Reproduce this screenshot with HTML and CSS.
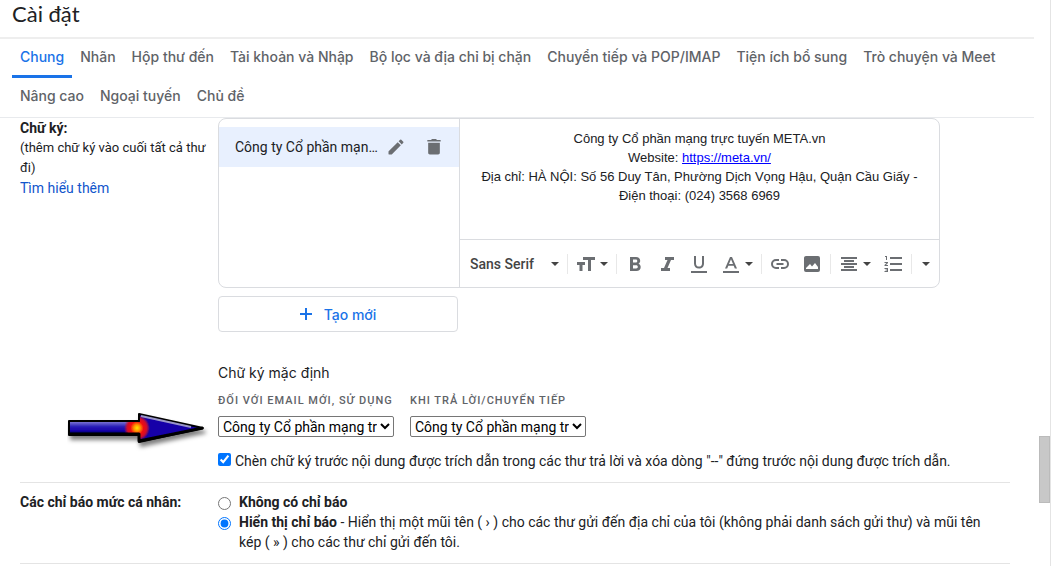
FILE: index.html
```html
<!DOCTYPE html>
<html lang="vi">
<head>
    <meta charset="UTF-8">
    <meta name="viewport" content="width=device-width, initial-scale=1.0">
    <title>Cài đặt</title>
    <link rel="stylesheet" href="styles.css">
</head>
<body>
    <main class="settings">
        <h1 class="title">Cài đặt</h1>
        <nav class="tabs">
            <a class="tab active" href="#chung">Chung</a>
            <a class="tab" href="#nhan">Nhãn</a>
            <a class="tab" href="#hopthu">Hộp thư đến</a>
            <a class="tab" href="#taikhoan">Tài khoản và Nhập</a>
            <a class="tab" href="#boloc">Bộ lọc và địa chỉ bị chặn</a>
            <a class="tab" href="#chuyentiep">Chuyển tiếp và POP/IMAP</a>
            <a class="tab" href="#tienich">Tiện ích bổ sung</a>
            <a class="tab" href="#trochuyen">Trò chuyện và Meet</a>
            <a class="tab" href="#nangcao">Nâng cao</a>
            <a class="tab" href="#ngoaituyen">Ngoại tuyến</a>
            <a class="tab" href="#chude">Chủ đề</a>
        </nav>

        <section class="row">
            <div class="row-label">
                <b>Chữ ký:</b>
                <p class="hint">(thêm chữ ký vào cuối tất cả thư đi)</p>
                <a class="more" href="#more">Tìm hiểu thêm</a>
            </div>
            <div class="row-body">
                <div class="editor">
                    <div class="sig-list">
                        <div class="sig-item">
                            <span class="sig-name">Công ty Cổ phần mạng trực tuyến META</span>
                            <button class="icon-btn" type="button" aria-label="Chỉnh sửa">
                                <svg class="icon" viewBox="0 0 24 24"><path d="M3 17.46v3.04c0 .28.22.5.5.5h3.04c.13 0 .26-.05.35-.15L17.81 9.94l-3.75-3.75L3.15 17.1c-.1.1-.15.22-.15.36zM20.71 7.04a1 1 0 0 0 0-1.41l-2.34-2.34a1 1 0 0 0-1.41 0l-1.83 1.83 3.75 3.75 1.83-1.83z"/></svg>
                            </button>
                            <button class="icon-btn trash" type="button" aria-label="Xóa">
                                <svg class="icon" viewBox="0 0 24 24"><path d="M5 19c0 1.100.9 2 2 2h10c1.100 0 2-.9 2-2V7H5v12zM20 3.500h-4.500l-1-1h-5l-1 1H4v2h16z"/></svg>
                            </button>
                        </div>
                    </div>
                    <div class="compose">
                        <div class="sig-text">
                            Công ty Cổ phần mạng trực tuyến META.vn<br>
                            Website: <a href="https://meta.vn/">https://meta.vn/</a><br>
                            Địa chỉ: HÀ NỘI: Số 56 Duy Tân, Phường Dịch Vọng Hậu, Quận Cầu Giấy -<br>
                            Điện thoại: (024) 3568 6969
                        </div>
                        <div class="toolbar">
                            <button class="tool font" type="button">Sans Serif <i class="caret"></i></button>
                            <span class="sep"></span>
                            <button class="tool drop" type="button" aria-label="Kích thước">
                                <svg class="icon" viewBox="0 0 20 20"><path d="M7 3h12v3h-4v11h-3V6H7zM1 8h8v3H6.500v6h-3v-6H1z"/></svg>
                                <i class="caret"></i>
                            </button>
                            <span class="sep"></span>
                            <button class="tool" type="button" aria-label="Đậm">
                                <svg class="icon" viewBox="0 0 20 20"><path fill-rule="evenodd" d="M5 3h6c2.500 0 4.200 1.500 4.200 3.700 0 1.400-.7 2.400-1.700 3 1.400.6 2.200 1.800 2.200 3.300 0 2.400-1.700 4-4.300 4H5zM8 5.600v3h2.800c1 0 1.500-.6 1.500-1.500s-.5-1.500-1.500-1.500zM8 11.200v3.200h3.200c1 0 1.600-.6 1.600-1.600s-.6-1.600-1.600-1.600z"/></svg>
                            </button>
                            <button class="tool" type="button" aria-label="Nghiêng">
                                <svg class="icon" viewBox="0 0 20 20"><path d="M8 3h9v3h-3l-3.500 8H13v3H4v-3h3l3.500-8H8z"/></svg>
                            </button>
                            <button class="tool" type="button" aria-label="Gạch chân">
                                <svg class="icon" viewBox="0 0 20 20"><path d="M5 2h2v7.500c0 2 1 3.100 3 3.100s3-1.100 3-3.100V2h2v7.600c0 3.100-2 5-5 5s-5-1.900-5-5zM2 17h16v2H2z"/></svg>
                            </button>
                            <button class="tool drop" type="button" aria-label="Màu chữ">
                                <svg class="icon" viewBox="0 0 20 20"><path fill-rule="evenodd" d="M9 3h2l5 11.500h-2.200l-1.100-2.800H7.300l-1.100 2.800H4zM10 5.200 8 10h4zM2 17h16v2H2z"/></svg>
                                <i class="caret"></i>
                            </button>
                            <span class="sep"></span>
                            <button class="tool" type="button" aria-label="Liên kết">
                                <svg class="icon" viewBox="0 0 20 20"><path d="M9 5v2H6a3 3 0 0 0 0 6h3v2H6A5 5 0 0 1 6 5zM11 5h3a5 5 0 0 1 0 10h-3v-2h3a3 3 0 0 0 0-6h-3zM6.500 9h7v2h-7z"/></svg>
                            </button>
                            <button class="tool" type="button" aria-label="Chèn ảnh">
                                <svg class="icon" viewBox="0 0 20 20"><path fill-rule="evenodd" d="M4 2h12a2 2 0 0 1 2 2v12a2 2 0 0 1-2 2H4a2 2 0 0 1-2-2V4c0-1.100.9-2 2-2zM4 15h12v-2l-3-4-3 3.500L8 10l-4 4z"/></svg>
                            </button>
                            <span class="sep"></span>
                            <button class="tool drop" type="button" aria-label="Căn chỉnh">
                                <svg class="icon" viewBox="0 0 20 20"><path d="M2 3h16v2H2zM5 6h10v2H5zM2 9h16v2H2zM5 12h10v2H5zM2 15h16v2H2z"/></svg>
                                <i class="caret"></i>
                            </button>
                            <button class="tool" type="button" aria-label="Danh sách đánh số">
                                <svg class="icon" viewBox="0 0 20 20"><path d="M7 3h12v2H7zM7 9h12v2H7zM7 15h12v2H7zM2 2h2v4H3V3H2zM1.500 8H5v1l-2 2h2v1H1.500v-1l2-2h-2zM1.500 14H5v4H1.500v-1H4v-.5H2.500v-1H4V15H1.500z"/></svg>
                            </button>
                            <span class="sep"></span>
                            <button class="tool last" type="button" aria-label="Thêm"><i class="caret"></i></button>
                        </div>
                    </div>
                </div>
                <button class="create" type="button">
                    <svg class="plus" viewBox="0 0 12 12"><path d="M5 0h2v5h5v2H7v5H5V7H0V5h5z"/></svg>
                    Tạo mới
                </button>

                <div class="defaults">
                    <h2 class="subtitle">Chữ ký mặc định</h2>
                    <div class="selects">
                        <div class="field">
                            <label for="new-mail">ĐỐI VỚI EMAIL MỚI, SỬ DỤNG</label>
                            <select id="new-mail">
                                <option>Công ty Cổ phần mạng trực tuyến META</option>
                            </select>
                        </div>
                        <div class="field">
                            <label for="reply">KHI TRẢ LỜI/CHUYỂN TIẾP</label>
                            <select id="reply">
                                <option>Công ty Cổ phần mạng trực tuyến META</option>
                            </select>
                        </div>
                    </div>
                    <!-- arrow pointing at the select -->
                    <svg class="pointer" viewBox="0 0 144 44">
                        <defs>
                            <linearGradient id="shaft" gradientUnits="userSpaceOnUse" x1="0" y1="12" x2="0" y2="26">
                                <stop offset="0" stop-color="#8a84d8"/>
                                <stop offset=".4" stop-color="#2a1fb8"/>
                                <stop offset=".7" stop-color="#1400a8"/>
                                <stop offset="1" stop-color="#00002c"/>
                            </linearGradient>
                            <radialGradient id="glow" gradientUnits="userSpaceOnUse" cx="70" cy="19" r="13">
                                <stop offset="0" stop-color="#ffe600"/>
                                <stop offset=".25" stop-color="#ff9000"/>
                                <stop offset=".5" stop-color="#f01010"/>
                                <stop offset=".75" stop-color="#d0102c"/>
                                <stop offset="1" stop-color="#d0102c" stop-opacity="0"/>
                            </radialGradient>
                            <filter id="shade" x="-10%" y="-20%" width="120%" height="160%">
                                <feDropShadow dx="2" dy="4" stdDeviation="2" flood-color="#000" flood-opacity=".5"/>
                            </filter>
                        </defs>
                        <g filter="url(#shade)" stroke-linejoin="round">
                            <path d="M2 12h70V5l64 14-64 14v-7H2z" fill="#1400a8" stroke="#000" stroke-width="2"/>
                            <path d="M3 13h70v12H3z" fill="url(#shaft)"/>
                            <path d="M3 13h70V7l56 12-56 12v-6H3z" fill="url(#glow)"/>
                            <path d="M74 7l50 11" fill="none" stroke="#9a96c8" stroke-width="2"/>
                            <path d="M2 25h70v7l64-13" fill="none" stroke="#000" stroke-width="3"/>
                        </g>
                    </svg>
                </div>
                <label class="choice">
                    <input type="checkbox" checked>
                    <span>Chèn chữ ký trước nội dung được trích dẫn trong các thư trả lời và xóa dòng "--" đứng trước nội dung được trích dẫn.</span>
                </label>
            </div>
        </section>

        <section class="row indicators">
            <div class="row-label"><b>Các chỉ báo mức cá nhân:</b></div>
            <div class="row-body">
                <label class="option">
                    <input type="radio" name="indicator">
                    <b>Không có chỉ báo</b>
                </label>
                <label class="option">
                    <input type="radio" name="indicator" checked>
                    <span><b>Hiển thị chỉ báo</b> - Hiển thị một mũi tên ( › ) cho các thư gửi đến địa chỉ của tôi (không phải danh sách gửi thư) và mũi tên kép ( » ) cho các thư chỉ gửi đến tôi.</span>
                </label>
            </div>
        </section>
    </main>
    <div class="scroll"><div class="thumb"></div></div>
</body>
</html>
```

FILE: styles.css
```css
* {
    box-sizing: border-box;
}
body {
    margin: 0;
    display: flex;
    min-height: 100vh;
    padding-right: 12px;
    background: #fff;
    color: #202124;
    font-family: Roboto, "Liberation Sans", sans-serif;
    font-size: 14px;
    line-height: 20px;
}
button, select {
    font-family: inherit;
}
button {
    border: 0;
    padding: 0;
    background: none;
    cursor: pointer;
}
.settings {
    flex: 1;
    min-width: 0;
}
.title {
    margin: 0;
    padding: 0 12px 9px;
    border-bottom: 2px solid #eee;
    font-family: Lato, sans-serif;
    font-size: 22px;
    font-weight: 400;
    line-height: 28px;
}
.tabs {
    display: flex;
    flex-wrap: wrap;
    padding-left: 12px;
    border-bottom: 1px solid #e8eaed;
}
.tab {
    padding: 0 8px;
    border-bottom: 3px solid transparent;
    color: #5f6368;
    font-family: Inter, sans-serif;
    font-size: 14px;
    font-weight: 500;
    line-height: 36px;
    text-decoration: none;
}
.tab.active {
    border-color: #1a73e8;
    color: #1a73e8;
}
.row {
    display: grid;
    grid-template-columns: 190px 1fr;
    column-gap: 8px;
    margin: 0 24px 0 20px;
    border-bottom: 1px solid #e4e4e4;
}
.hint {
    margin: 0;
    font-size: 13px;
}
.more {
    color: #15c;
    text-decoration: none;
}

/* signature editor */
.editor {
    display: flex;
    max-width: 722px;
    height: 170px;
    border: 1px solid #dadce0;
    border-radius: 8px;
}
.sig-list {
    width: 241px;
    padding-top: 8px;
    border-right: 1px solid #dadce0;
}
.sig-item {
    display: flex;
    align-items: center;
    height: 40px;
    padding: 0 15px 0 16px;
    background: #e8f0fe;
}
.sig-name {
    flex: 1;
    overflow: hidden;
    white-space: nowrap;
    text-overflow: ellipsis;
}
.icon {
    display: block;
    width: 20px;
    height: 20px;
    fill: #6b6e72;
}
.icon-btn {
    margin-left: 4px;
}
.trash {
    margin-left: 18px;
}
.compose {
    flex: 1;
    display: flex;
    flex-direction: column;
}
.sig-text {
    flex: 1;
    padding-top: 10px;
    font-family: "Liberation Sans", Arial, sans-serif;
    font-size: 13px;
    line-height: 19px;
    text-align: center;
}
.sig-text a {
    color: #00f;
}
.toolbar {
    display: flex;
    align-items: center;
    height: 48px;
    padding-left: 10px;
    border-top: 1px solid #dadce0;
}
.tool {
    display: flex;
    flex: none;
    align-items: center;
    justify-content: center;
    width: 32px;
    height: 28px;
}
.tool.drop {
    width: 44px;
    gap: 4px;
}
.tool.font {
    justify-content: space-between;
    width: 95px;
    padding-right: 6px;
    color: #444;
    font-size: 14px;
    font-weight: 500;
}
.tool.last {
    width: 24px;
}
.caret {
    border: 4px solid transparent;
    border-top-color: #444;
    border-bottom: 0;
}
.sep {
    flex: none;
    width: 1px;
    height: 20px;
    margin: 0 2px;
    background: #e8e8e8;
}
.create {
    display: flex;
    align-items: center;
    justify-content: center;
    gap: 12px;
    width: 240px;
    height: 36px;
    margin-top: 8px;
    border: 1px solid #dadce0;
    border-radius: 4px;
    color: #1a73e8;
    font-family: Inter, sans-serif;
    font-size: 14px;
    font-weight: 500;
}
.plus {
    width: 12px;
    height: 12px;
    fill: #1a73e8;
}

/* default signatures */
.defaults {
    position: relative;
    margin-top: 31px;
}
.subtitle {
    margin: 0 0 8px;
    font-family: Inter, sans-serif;
    font-size: 14px;
    font-weight: 400;
    line-height: 20px;
}
.selects {
    display: flex;
    gap: 16px;
}
.field {
    width: 176px;
}
.field label {
    display: block;
    margin-bottom: 5px;
    color: #5f6368;
    font-size: 11px;
    font-weight: 500;
    letter-spacing: 1px;
    white-space: nowrap;
}
.field select {
    display: block;
    width: 100%;
    height: 21px;
    padding: 0;
    border: 1px solid #767676;
    border-radius: 2px;
    background: #fff;
    color: #000;
    font-size: 14px;
}
.pointer {
    position: absolute;
    left: -151px;
    top: 46px;
    width: 144px;
    height: 44px;
}
.choice {
    display: flex;
    gap: 4px;
    margin: 14px 0 11px;
}
.choice input {
    width: 13px;
    height: 13px;
    margin: 2px 0 0;
}
.indicators {
    padding: 9px 0 11px;
}
.option {
    display: flex;
    gap: 8px;
    padding-right: 4px;
}
.option input {
    flex: none;
    width: 13px;
    height: 13px;
    margin: 5px 0 0;
}
.scroll {
    width: 17px;
    border-right: 1px solid #e4e4e4;
}
.thumb {
    width: 11px;
    height: 67px;
    margin: 436px 0 0 auto;
    border: 1px solid #bbb;
    background: #c8c8c8;
}
```
